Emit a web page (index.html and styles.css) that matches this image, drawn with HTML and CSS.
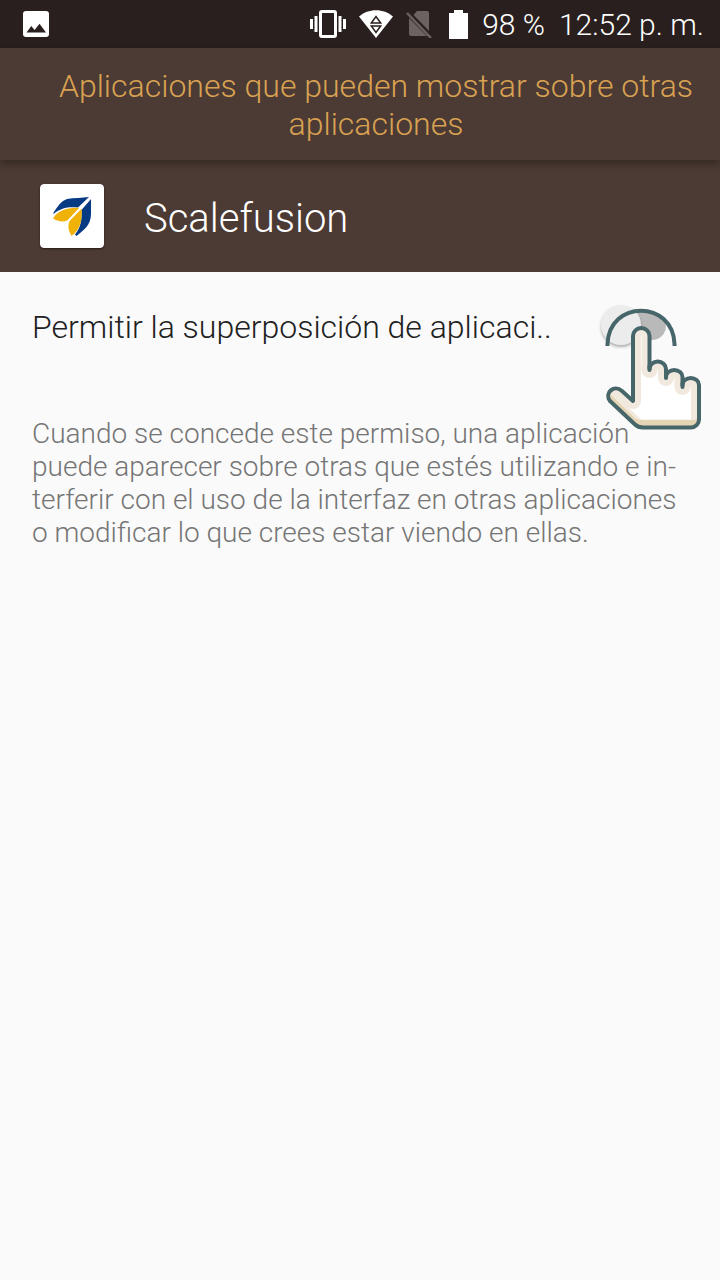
FILE: index.html
```html
<!DOCTYPE html>
<html lang="es">
<head>
<meta charset="utf-8">
<meta name="viewport" content="width=device-width, initial-scale=1">
<title>Aplicaciones que pueden mostrar sobre otras aplicaciones</title>
<link rel="stylesheet" href="styles.css">
</head>
<body>
<div class="status-bar">
  <svg class="status-photo" width="26" height="26" viewBox="0 0 26 26" aria-hidden="true">
    <rect width="26" height="26" rx="3" fill="#fff"/>
    <path d="M3.500 21.500 8.300 15l3.300 4 4.900-6.200 6.500 8.700z" fill="#291f1e"/>
  </svg>
  <div class="status-icons">
    <svg width="36" height="28" viewBox="0 0 36 28" aria-hidden="true">
      <path fill="#fff" d="M0 9h3v10H0zM4.500 6h3v16h-3zM28.500 6h3v16h-3zM33 9h3v10h-3z"/>
      <rect x="10.500" y="1.500" width="15" height="25" rx="1.500" fill="none" stroke="#fff" stroke-width="3"/>
    </svg>
    <svg width="34" height="28" viewBox="0 0 34 28" aria-hidden="true">
      <path fill="#fff" d="M17 28 0 6.500C9-2 25-2 34 6.500z"/>
      <path fill="#fff" stroke="#291f1e" stroke-width="1.500" d="M12.300 13h9.400L17 6.500zM12.300 16h9.400L17 22.500z"/>
    </svg>
    <svg width="26" height="28" viewBox="0 0 26 28" aria-hidden="true">
      <path fill="#6a6362" d="M11 1h10q2 0 2 2v18L7.500 5zM3 8l18 18H5q-2 0-2-2z"/>
      <path d="M1 3l24 25" stroke="#6a6362" stroke-width="2.500"/>
    </svg>
    <svg width="19" height="29" viewBox="0 0 19 29" aria-hidden="true">
      <path fill="#fff" d="M5 0h9v3h5v26H0V3h5z"/>
    </svg>
  </div>
  <span class="battery">98 %</span>
  <time class="clock">12:52 p. m.</time>
</div>
<header class="app-bar">
  <h1 class="title">Aplicaciones que pueden mostrar sobre otras aplicaciones</h1>
</header>
<section class="app-header">
  <svg class="app-icon" width="64" height="64" viewBox="0 0 64 64" aria-hidden="true">
    <rect width="64" height="64" rx="4" fill="#fff"/>
    <path fill="#063b84" d="M13.500 28.500C18 22 21 17 27 15c7-1.500 15-.8 22-2L38 23.500c-9-1-17 0-24.500 6.500z"/>
    <path fill="#063b84" d="M51 15v15c0 11-7 16-14.500 22l-1.500-1.500c6-7 7-16 6.500-24.500z"/>
    <path fill="#f0b208" d="M13 34.500c4-8 16-11.500 26-10.500L27.500 36.500C22 38.500 17 37 13 34.500z"/>
    <path fill="#f0b208" d="M41.500 24.500c1 11-1 21-10 27.500-4-7-3.500-10.500-2-15z"/>
    <path d="M27 38 50.500 14" stroke="#fff" stroke-width="1.500"/>
  </svg>
  <h2 class="app-name">Scalefusion</h2>
</section>
<main class="content">
  <div class="setting">
    <label class="setting-label" for="overlay">Permitir la superposición de aplicaci..</label>
    <span class="switch-area">
      <input class="switch" type="checkbox" role="switch" id="overlay">
      <svg class="hand" width="104" height="128" viewBox="12 16 104 128" aria-hidden="true">
        <defs>
          <path id="hand-shape" d="M43 111V46a8.250 8 0 0 1 16.500 0V79a8.250 7.500 0 0 1 16.500 0V87a8.250 7 0 0 1 16.500 0V95a8.250 7 0 0 1 16.500 0V129.500a8 8 0 0 1-8 8H53q-5 0-8-3L20 111C14 103 24 94 32 101z"/>
          <clipPath id="hand-clip"><use href="#hand-shape"/></clipPath>
        </defs>
        <use href="#hand-shape" fill="#fff"/>
        <g clip-path="url(#hand-clip)">
          <use href="#hand-shape" fill="none" stroke="#f2e9de" stroke-width="16" stroke-linejoin="round"/>
          <path d="M59.500 76V80M76 85V88M92.500 93V97" stroke="#f2e9de" stroke-width="16" stroke-linecap="round"/>
          <path d="M16 101 20 104 46 129 50 130H105L110 126V140H45L16 115z" fill="#e6d5b5"/>
        </g>
        <use href="#hand-shape" fill="none" stroke="#47666a" stroke-width="4" stroke-linejoin="round"/>
        <path d="M59.500 76V80M76 85V88M92.500 93V97" stroke="#47666a" stroke-width="4" stroke-linecap="round"/>
        <path d="M17.500 54C19 9.500 83 9.500 84.500 54" fill="none" stroke="#47666a" stroke-width="4" stroke-linecap="square"/>
      </svg>
    </span>
  </div>
  <p class="description">Cuando se concede este permiso, una aplicación puede aparecer sobre otras que estés utilizando e in&shy;terferir con el uso de la interfaz en otras aplicaciones o modificar lo que crees estar viendo en ellas.</p>
</main>
</body>
</html>
```

FILE: styles.css
```css
* {
  box-sizing: border-box;
}

body {
  margin: 0;
  background: #fafafa;
  font-family: Roboto, "Noto Sans", sans-serif;
  font-weight: 300;
}

h1,
h2,
p {
  margin: 0;
  font-weight: 300;
}

svg {
  display: block;
  flex: none;
}

.status-bar {
  display: flex;
  align-items: center;
  height: 48px;
  padding: 0 16px 0 23px;
  background: #291f1e;
  color: #fff;
  font-size: 30px;
  line-height: 48px;
  white-space: nowrap;
}

.status-icons {
  display: flex;
  align-items: center;
  gap: 13px;
  margin-left: auto;
}

.status-icons svg:last-child {
  margin-left: 4px;
}

.battery,
.clock {
  padding-top: 2px;
  margin-left: 14px;
}

.app-bar {
  position: relative;
  padding: 19px 16px 17px 48px;
  background: #4c3a34;
  box-shadow: 0 3px 8px rgba(0, 0, 0, 0.35);
  text-align: center;
}

.title {
  color: #d9a252;
  font-size: 32px;
  line-height: 38px;
}

.app-header {
  display: flex;
  align-items: center;
  gap: 40px;
  padding: 24px 40px;
  background: #4c3a34;
  color: #fff;
}

.app-icon {
  border-radius: 4px;
  box-shadow: 0 1px 2px rgba(0, 0, 0, 0.5);
}

.app-name {
  padding-top: 6px;
  font-size: 40px;
  line-height: 58px;
}

.content {
  padding: 0 32px;
}

.setting {
  display: flex;
  align-items: center;
  justify-content: space-between;
  height: 112px;
}

.setting-label {
  padding-bottom: 2px;
  color: #212121;
  font-size: 32px;
  line-height: 40px;
  white-space: nowrap;
}

.switch-area {
  position: relative;
  flex: none;
  width: 88px;
  height: 40px;
}

.switch {
  appearance: none;
  position: relative;
  display: block;
  width: 54px;
  height: 28px;
  margin: 4px 12px;
  border-radius: 14px;
  background: #b9b9b9;
}

.switch::before {
  content: "";
  position: absolute;
  top: -7px;
  left: -11px;
  width: 40px;
  height: 40px;
  border-radius: 50%;
  background: #ececec;
  box-shadow: 0 2px 3px rgba(0, 0, 0, 0.3);
}

.hand {
  position: absolute;
  top: -2px;
  left: 2px;
  pointer-events: none;
}

.description {
  padding-top: 33px;
  color: #757575;
  font-size: 28px;
  line-height: 33px;
  hyphens: manual;
}
```
